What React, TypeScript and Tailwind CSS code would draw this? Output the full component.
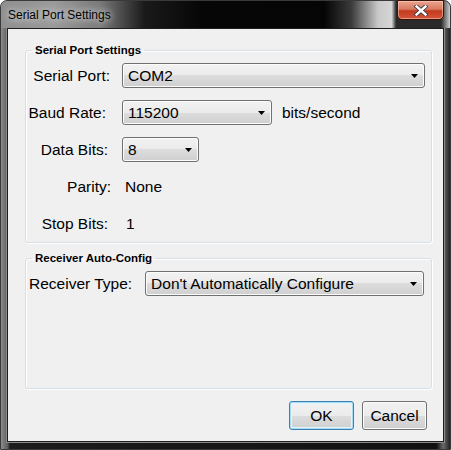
import type { ReactNode } from "react";

const FONT = "font-['Liberation_Sans',Arial,sans-serif]";

function Arrow() {
  return (
    <svg width="7" height="4" viewBox="0 0 7 4" className="shrink-0">
      <path d="M0 0h7L3.5 4z" fill="#000" />
    </svg>
  );
}

function Combo({ value, w }: { value: string; w: string }) {
  return (
    <div
      className={`${w} flex h-[25px] items-center justify-between rounded-[3px] border border-[#707070] bg-[linear-gradient(#f2f2f2,#ebebeb_50%,#dddddd_50%,#cfcfcf)] pl-[5px] pr-[6px] shadow-[inset_0_0_0_1px_#fcfcfc] text-[15.5px] text-black`}
    >
      <span>{value}</span>
      <Arrow />
    </div>
  );
}

function Row({ label, pr, children }: { label: string; pr: string; children: ReactNode }) {
  return (
    <div className="flex h-[37px] items-center">
      <div className={`w-[85px] shrink-0 text-right text-[15.5px] text-black ${pr}`}>{label}</div>
      <div className="ml-[11px] flex items-center">{children}</div>
    </div>
  );
}

function Group({ title, className, children }: { title: string; className?: string; children: ReactNode }) {
  return (
    <fieldset className={`rounded-[3px] border border-[#d5dfe5] shadow-[inset_1px_1px_0_#fff,1px_1px_0_#fff] ${className ?? ""}`}>
      <legend className="ml-[6px] px-[3px] text-[11.5px] leading-[14px] font-bold text-black">{title}</legend>
      {children}
    </fieldset>
  );
}

function Btn({ label, primary }: { label: string; primary?: boolean }) {
  return (
    <div
      className={`flex h-[29px] w-[65px] items-center justify-center rounded-[3px] border text-[15.5px] text-black bg-[linear-gradient(#f2f2f2,#ebebeb_50%,#dddddd_50%,#cfcfcf)] ${
        primary
          ? "border-[#3c7fb1] shadow-[inset_0_0_0_1px_#a6dcf6,inset_0_0_0_2px_#e3f4fc]"
          : "border-[#707070] shadow-[inset_0_0_0_1px_#fcfcfc]"
      }`}
    >
      {label}
    </div>
  );
}

export default function App() {
  return (
    <div className={`${FONT} h-[450px] w-[451px] overflow-hidden bg-white`}>
      <div className="flex h-full w-full flex-col rounded-t-[7px] border border-[#3a3a3a] bg-[linear-gradient(90deg,#8c8c8c,#5c5c5c_1.5%,#1c1c1c_2%,#111_97%,#6a6a6a_98.5%,#222)]">
        {/* title bar */}
        <div className="relative flex h-[27px] shrink-0 items-center rounded-t-[6px] bg-[linear-gradient(90deg,#8f8f8f,#9a9a9a_12%,#7a7a7a_22%,#1a1a1a_32%,#060606_45%,#050505_72%,#3a3a3a_78%,#c9c9c9_84%,#d6d6d6_87%,#2a2a2a_88%,#2a2a2a_98%,#cfcfcf)]">
          <span className="ml-[7px] text-[12px] text-black [text-shadow:0_0_6px_#d8d8d8,0_0_10px_#cfcfcf]">Serial Port Settings</span>
          <div className="absolute right-[6px] top-[-1px] flex h-[20px] w-[47px] items-center justify-center rounded-b-[5px] border border-[#3b1208] bg-[linear-gradient(#eaa48f,#d97a60_45%,#c23a1e_55%,#d4543a)] shadow-[inset_0_0_0_1px_rgba(255,220,200,0.5)]">
            <svg width="14" height="11" viewBox="0 0 14 11">
              <path d="M2.5 1.5l9 8M11.5 1.5l-9 8" stroke="#3a3a4a" strokeWidth="4.2" strokeLinecap="square" />
              <path d="M2.5 1.5l9 8M11.5 1.5l-9 8" stroke="#fff" strokeWidth="2.4" strokeLinecap="square" />
            </svg>
          </div>
        </div>

        {/* client area */}
        <div className="mx-[6px] mb-[7px] flex flex-1 flex-col border border-[#1e1e1e] bg-[#f0f0f0] pl-[17px] pr-[11px] pt-[14px] shadow-[0_0_0_1px_#8a8a8a]">
          <Group title="Serial Port Settings">
            <Row label="Serial Port:" pr="pr-[1px]">
              <Combo value="COM2" w="w-[303px]" />
            </Row>
            <Row label="Baud Rate:" pr="pr-[5px]">
              <Combo value="115200" w="w-[150px]" />
              <span className="ml-[10px] text-[15.5px] text-black">bits/second</span>
            </Row>
            <Row label="Data Bits:" pr="pr-[3px]">
              <Combo value="8" w="w-[77px]" />
            </Row>
            <Row label="Parity:" pr="pr-0">
              <span className="ml-[3px] text-[15.5px] text-black">None</span>
            </Row>
            <Row label="Stop Bits:" pr="pr-[3px]">
              <span className="ml-[4px] text-[15.5px] text-black">1</span>
            </Row>
          </Group>

          <Group title="Receiver Auto-Config" className="mt-[8px] h-[138px]">
            <div className="flex h-[37px] items-center">
              <div className="ml-[3px] text-[15.5px] text-black">Receiver Type:</div>
              <div className="ml-[13px]">
                <Combo value="Don't Automatically Configure" w="w-[279px]" />
              </div>
            </div>
          </Group>

          <div className="mt-[12px] flex justify-end gap-[8px] pr-[5px]">
            <Btn label="OK" primary />
            <Btn label="Cancel" />
          </div>
        </div>
      </div>
    </div>
  );
}
